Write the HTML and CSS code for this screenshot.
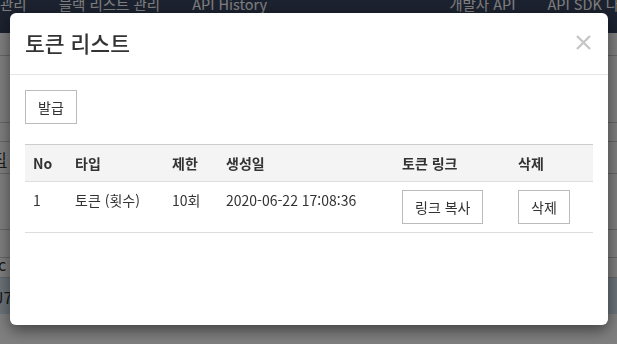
FILE: index.html
```html
<!DOCTYPE html>
<html lang="ko">
<head>
    <meta charset="UTF-8">
    <meta name="viewport" content="width=device-width, initial-scale=1.0">
    <title>토큰 리스트</title>
    <link rel="stylesheet" href="styles.css">
</head>
<body>
    <!-- 뒤쪽 페이지 -->
    <nav class="topnav">
        <span class="nav-item">관리</span>
        <span class="nav-item">블랙 리스트 관리</span>
        <span class="nav-item">API History</span>
        <span class="nav-spacer"></span>
        <span class="nav-item">개발자 API</span>
        <span class="nav-item">API SDK 다운로드</span>
    </nav>
    <div class="page">
        <div class="page-row r1"></div>
        <div class="page-row r2"></div>
        <div class="page-row r3"><span class="under">집</span></div>
        <div class="page-row r4"></div>
        <div class="page-row r5"></div>
        <div class="page-row r6">c</div>
        <div class="page-row r7 info">U7</div>
    </div>

    <!-- 모달 -->
    <div class="backdrop"></div>
    <div class="modal">
        <div class="modal-header">
            <h4 class="modal-title">토큰 리스트</h4>
            <button class="close" type="button">
                <svg width="17" height="17" viewBox="0 0 17 17">
                    <path d="M2 2 L15 15 M15 2 L2 15" stroke="#c6c6c6" stroke-width="2.4" fill="none"/>
                </svg>
            </button>
        </div>
        <div class="modal-body">
            <button class="btn">발급</button>
            <table class="token-table">
                <thead>
                    <tr>
                        <th class="col-no">No</th>
                        <th class="col-type">타입</th>
                        <th class="col-limit">제한</th>
                        <th class="col-date">생성일</th>
                        <th class="col-link">토큰 링크</th>
                        <th class="col-del">삭제</th>
                    </tr>
                </thead>
                <tbody>
                    <tr>
                        <td>1</td>
                        <td>토큰 (횟수)</td>
                        <td>10회</td>
                        <td>2020-06-22 17:08:36</td>
                        <td><button class="btn">링크 복사</button></td>
                        <td><button class="btn">삭제</button></td>
                    </tr>
                </tbody>
            </table>
        </div>
    </div>
</body>
</html>
```

FILE: styles.css
```css
body {
    font-family: "Noto Sans CJK KR", "Noto Sans", sans-serif;
    font-size: 14px;
    line-height: 20px;
    color: #333;
    background-color: #fff;
    margin: 0;
    padding: 0;
    overflow: hidden;
}

/* 뒤쪽 페이지 */
.topnav {
    display: flex;
    align-items: flex-start;
    gap: 32px;
    height: 33px;
    overflow: hidden;
    background-color: #37445e;
    color: #fff;
    font-size: 14.5px;
    line-height: 20px;
    white-space: nowrap;
}
.nav-item {
    margin-top: -6px;
}
.nav-spacer {
    flex: none;
    width: 118px;
}
.page {
    padding-top: 22px;
}
.page-row {
    border-top: 1px solid #ccc;
    font-size: 16px;
    line-height: 20px;
    margin-left: -6px;
}
.r1 { height: 66px; }
.r2 { height: 18px; }
.r3 { height: 32px; padding-top: 7px; box-sizing: border-box; margin-left: -8px; }
.r4 { height: 55px; }
.r5 { height: 27px; }
.r6 { height: 19px; line-height: 12px; margin-left: -2px; }
.r7 { height: 36px; line-height: 38px; margin-left: -8px; }
.info {
    background-color: #d6e6f2;
}
.under {
    text-decoration: underline;
}

/* 모달 */
.backdrop {
    position: fixed;
    inset: 0;
    background-color: rgba(0, 0, 0, 0.5);
}
.modal {
    position: fixed;
    top: 13px;
    left: 10px;
    width: 598px;
    height: 312px;
    background-color: #fff;
    border-radius: 6px;
    box-shadow: 0 5px 15px rgba(0, 0, 0, 0.5);
}
.modal-header {
    display: flex;
    align-items: center;
    justify-content: space-between;
    height: 61px;
    padding: 0 16px 0 15px;
    border-bottom: 1px solid #e5e5e5;
}
.modal-title {
    margin: 0;
    font-size: 21.5px;
    font-weight: 500;
    line-height: 28px;
    margin-top: -1px;
}
.close {
    border: none;
    background: none;
    padding: 0;
    width: 17px;
    height: 17px;
    margin-top: -2px;
}
.close svg {
    display: block;
}
.modal-body {
    padding: 15px;
}
.btn {
    font-family: inherit;
    font-size: 14px;
    line-height: 20px;
    color: #333;
    background-color: #fff;
    border: 1px solid #bbb;
    border-radius: 0;
    padding: 6px 12px;
    height: 34px;
}
.token-table {
    width: 100%;
    margin-top: 20px;
    border-collapse: collapse;
    table-layout: fixed;
}
.token-table th,
.token-table td {
    box-sizing: border-box;
    padding: 8px;
    text-align: left;
}
.token-table th {
    font-weight: 700;
    background-color: #f4f4f4;
    border-top: 1px solid #ccc;
    border-bottom: 1px solid #ddd;
}
.token-table td {
    vertical-align: top;
    border-bottom: 1px solid #ddd;
}
.col-no { width: 42px; }
.col-type { width: 97px; }
.col-limit { width: 54px; }
.col-date { width: 176px; }
.col-link { width: 116px; }
.col-del { width: 83px; }
```
